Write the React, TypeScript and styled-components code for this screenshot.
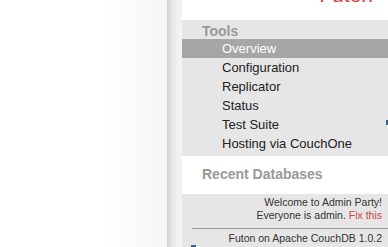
import React from 'react';
import styled, { createGlobalStyle } from 'styled-components';

const GlobalStyle = createGlobalStyle`
  html, body {
    margin: 0;
    padding: 0;
    overflow: hidden;
    background: #ffffff;
  }
`;

const Page = styled.div`
  display: flex;
  width: 388px;
  height: 247px;
  overflow: hidden;
  position: relative;
  font-family: "Liberation Sans", Arial, Helvetica, sans-serif;
`;

const Content = styled.div`
  width: 167px;
  background: linear-gradient(to right, #ffffff 0%, #ffffff 60%, #f6f6f6 100%);
`;

const Divider = styled.div`
  width: 15px;
  background: linear-gradient(to right, #d2d2d2 0%, #e2e2e2 25%, #efefef 60%, #f4f4f4 100%);
`;

const Sidebar = styled.div`
  flex: 1;
  display: flex;
  flex-direction: column;
  background: #e6e6e6;
`;

const Header = styled.div`
  height: 20px;
  flex-shrink: 0;
  background: #ffffff;
  overflow: hidden;
  display: flex;
  align-items: flex-start;
  justify-content: flex-end;
  padding-right: 15px;
`;

const Logo = styled.span`
  display: block;
  font-size: 21px;
  line-height: 21px;
  margin-top: -16px;
  color: #d83a3a;
`;

const Heading = styled.h3<{ $white?: boolean }>`
  margin: 0;
  padding-left: 20px;
  font-size: 14px;
  font-weight: bold;
  color: #999999;
  height: ${(p) => (p.$white ? '38px' : '19px')};
  line-height: ${(p) => (p.$white ? '36px' : '22px')};
  background: ${(p) => (p.$white ? '#ffffff' : 'transparent')};
`;

const Menu = styled.ul`
  list-style: none;
  margin: 0;
  padding: 0 0 3px;
`;

const Item = styled.li<{ $active?: boolean }>`
  height: 19px;
  line-height: 19px;
  padding-left: 40px;
  font-size: 13px;
  color: ${(p) => (p.$active ? '#ffffff' : '#222222')};
  background: ${(p) => (p.$active ? '#a6a6a6' : 'transparent')};
`;

const Footer = styled.div`
  padding: 2px 6px 0 10px;
  text-align: right;
  font-size: 10.5px;
  color: #333333;
`;

const Line = styled.div`
  line-height: 13px;
`;

const FixLink = styled.a`
  color: #cc4444;
  text-decoration: none;
`;

const Rule = styled.hr`
  border: none;
  border-top: 1px solid #9a9a9a;
  margin: 6px -6px 3px 0;
`;

const Peek = styled.span<{ $right?: number; $left?: number; $top: number; $w: number; $h: number }>`
  position: absolute;
  top: ${(p) => p.$top}px;
  ${(p) => (p.$left !== undefined ? `left: ${p.$left}px;` : `right: ${p.$right}px;`)}
  width: ${(p) => p.$w}px;
  height: ${(p) => p.$h}px;
  background: #3e5f8a;
`;

const tools = ['Overview', 'Configuration', 'Replicator', 'Status', 'Test Suite', 'Hosting via CouchOne'];

export default function App() {
  return (
    <Page>
      <GlobalStyle />
      <Content />
      <Divider />
      <Sidebar>
        <Header>
          <Logo>Futon</Logo>
        </Header>
        <Heading>Tools</Heading>
        <Menu>
          {tools.map((t, i) => (
            <Item key={t} $active={i === 0}>{t}</Item>
          ))}
        </Menu>
        <Heading $white>Recent Databases</Heading>
        <Footer>
          <Line>Welcome to Admin Party!</Line>
          <Line>
            Everyone is admin. <FixLink href="#">Fix this</FixLink>
          </Line>
          <Rule />
          <Line>Futon on Apache CouchDB 1.0.2</Line>
        </Footer>
      </Sidebar>
      <Peek $right={0} $top={120} $w={2} $h={5} />
      <Peek $left={191} $top={245} $w={5} $h={2} />
    </Page>
  );
}
